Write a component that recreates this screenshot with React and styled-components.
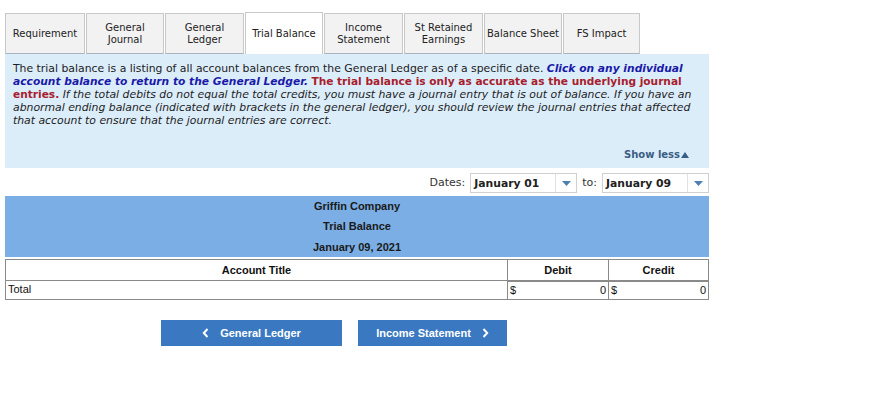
import React from "react";
import styled, { createGlobalStyle } from "styled-components";

const Global = createGlobalStyle`
  body { margin: 0; background: #fff; }
`;

const Page = styled.div`
  width: 704px;
  padding: 12px 0 0 5px;
  font-family: "DejaVu Sans", Verdana, sans-serif;
`;

const Tabs = styled.div`
  display: flex;
  align-items: flex-end;
  gap: 1px;
  height: 42px;
`;

const Tab = styled.div`
  box-sizing: border-box;
  width: ${(p) => p.$w}px;
  height: ${(p) => (p.$active ? 42 : 41)}px;
  display: flex;
  align-items: center;
  justify-content: center;
  text-align: center;
  font-size: 10px;
  line-height: 12px;
  color: #222;
  background: ${(p) => (p.$active ? "#fff" : "#f2f2f2")};
  border: 1px solid #c8c8c8;
  border-bottom: ${(p) => (p.$active ? "none" : "1px solid #a8b4c0")};
`;

const Info = styled.div`
  background: #dcedfa;
  height: 114px;
  box-sizing: border-box;
  padding: 8px 4px 0 8px;
  display: flex;
  flex-direction: column;
`;

const InfoText = styled.p`
  margin: 0;
  font-size: 10.85px;
  line-height: 13px;
  color: #222;
`;

const Blue = styled.span`
  color: #1a1aa8;
  font-weight: bold;
  font-style: italic;
  font-size: 10.7px;
`;

const Red = styled.span`
  color: #a8202c;
  font-weight: bold;
  font-size: 10.6px;
`;

const Em = styled.span`
  font-style: italic;
`;

const ShowLess = styled.div`
  margin-top: auto;
  margin-bottom: 8px;
  align-self: flex-end;
  padding-right: 16px;
  font-size: 10px;
  font-weight: bold;
  color: #3a5d84;
  display: flex;
  align-items: center;
  gap: 1px;
`;

const DatesRow = styled.div`
  display: flex;
  justify-content: flex-end;
  align-items: flex-end;
  gap: 5px;
  height: 26px;
  box-sizing: border-box;
  padding-bottom: 1px;
  font-size: 11px;
  color: #333;
`;

const Label = styled.span`
  line-height: 20px;
`;

const Select = styled.div`
  box-sizing: border-box;
  width: 107px;
  height: 20px;
  border: 1px solid #d0d0d0;
  background: #fff;
  display: flex;
  align-items: center;
`;

const SelectValue = styled.span`
  flex: 1;
  padding-left: 3px;
  font-weight: bold;
  font-size: 10.8px;
  color: #222;
`;

const SelectArrow = styled.span`
  width: 20px;
  height: 100%;
  border-left: 1px solid #e2e2e2;
  display: flex;
  align-items: center;
  justify-content: center;
`;

const Header = styled.div`
  margin-top: 2px;
  background: #7aaee4;
  height: 61px;
  display: flex;
  flex-direction: column;
  align-items: center;
  box-sizing: border-box;
`;

const HeaderLine = styled.div`
  height: 20.5px;
  line-height: 20px;
  font-family: "Liberation Sans", Arial, sans-serif;
  font-weight: bold;
  font-size: 11px;
  color: #1a1a1a;
`;

const Table = styled.div`
  margin-top: 2px;
  border: 1px solid #8a8a8a;
  font-family: "Liberation Sans", Arial, sans-serif;
  font-size: 11px;
  color: #111;
  display: grid;
  grid-template-columns: 501px 101px 1fr;
`;

const HeadCell = styled.div`
  height: 20px;
  line-height: 20px;
  text-align: center;
  font-weight: bold;
  border-left: ${(p) => (p.$first ? "none" : "1px solid #8a8a8a")};
  border-bottom: 1px solid #8a8a8a;
`;

const Cell = styled.div`
  height: 17px;
  line-height: 17px;
  padding: 0 2px;
  display: flex;
  justify-content: space-between;
  border-left: ${(p) => (p.$first ? "none" : "1px solid #8a8a8a")};
  border-top: ${(p) => (p.$first ? "none" : "2px solid #8a8a8a")};
  margin-top: ${(p) => (p.$first ? "0" : "-1px")};
`;

const Buttons = styled.div`
  display: flex;
  gap: 16px;
  padding: 20px 0 0 156px;
`;

const NavButton = styled.button`
  width: ${(p) => p.$w}px;
  height: 26px;
  border: none;
  background: #3a78c2;
  color: #fff;
  font-family: "Liberation Sans", Arial, sans-serif;
  font-weight: bold;
  font-size: 11px;
  display: flex;
  align-items: center;
  justify-content: center;
  gap: 11px;
  padding: 0;
`;

const Chevron = ({ dir }) => (
  <svg width="7" height="10" viewBox="0 0 7 10">
    <path
      d={dir === "left" ? "M5.5 1 L1.8 5 L5.5 9" : "M1.5 1 L5.2 5 L1.5 9"}
      fill="none"
      stroke="#fff"
      strokeWidth="2"
    />
  </svg>
);

const Caret = () => (
  <svg width="9" height="5" viewBox="0 0 9 5">
    <path d="M0 0 L9 0 L4.5 5 Z" fill="#4c7fb3" />
  </svg>
);

const UpTri = () => (
  <svg width="8" height="6" viewBox="0 0 8 6">
    <path d="M0 6 L8 6 L4 0 Z" fill="#3a5d84" />
  </svg>
);

const tabs = [
  { label: "Requirement", w: 80 },
  { label: ["General", "Journal"], w: 78 },
  { label: ["General", "Ledger"], w: 79 },
  { label: "Trial Balance", active: true, w: 78 },
  { label: ["Income", "Statement"], w: 79 },
  { label: ["St Retained", "Earnings"], w: 79 },
  { label: "Balance Sheet", w: 78 },
  { label: "FS Impact", w: 77 },
];

export default function App() {
  return (
    <Page>
      <Global />
      <Tabs>
        {tabs.map((t, i) => (
          <Tab key={i} $active={t.active} $w={t.w}>
            {Array.isArray(t.label) ? (
              <span>
                {t.label[0]}
                <br />
                {t.label[1]}
              </span>
            ) : (
              t.label
            )}
          </Tab>
        ))}
      </Tabs>
      <Info>
        <InfoText>
          The trial balance is a listing of all account balances from the General Ledger as of a specific date.{" "}
          <Blue>Click on any individual account balance to return to the General Ledger.</Blue>{" "}
          <Red>The trial balance is only as accurate as the underlying journal entries.</Red>{" "}
          <Em>
            If the total debits do not equal the total credits, you must have a journal entry that is out of balance. If
            you have an abnormal ending balance (indicated with brackets in the general ledger), you should review the
            journal entries that affected that account to ensure that the journal entries are correct.
          </Em>
        </InfoText>
        <ShowLess>
          Show less <UpTri />
        </ShowLess>
      </Info>
      <DatesRow>
        <Label>Dates:</Label>
        <Select>
          <SelectValue>January 01</SelectValue>
          <SelectArrow>
            <Caret />
          </SelectArrow>
        </Select>
        <Label>to:</Label>
        <Select>
          <SelectValue>January 09</SelectValue>
          <SelectArrow>
            <Caret />
          </SelectArrow>
        </Select>
      </DatesRow>
      <Header>
        <HeaderLine>Griffin Company</HeaderLine>
        <HeaderLine>Trial Balance</HeaderLine>
        <HeaderLine>January 09, 2021</HeaderLine>
      </Header>
      <Table>
        <HeadCell $first>Account Title</HeadCell>
        <HeadCell>Debit</HeadCell>
        <HeadCell>Credit</HeadCell>
        <Cell $first>Total</Cell>
        <Cell>
          <span>$</span>
          <span>0</span>
        </Cell>
        <Cell>
          <span>$</span>
          <span>0</span>
        </Cell>
      </Table>
      <Buttons>
        <NavButton $w={181}>
          <Chevron dir="left" />
          General Ledger
        </NavButton>
        <NavButton $w={149}>
          Income Statement
          <Chevron dir="right" />
        </NavButton>
      </Buttons>
    </Page>
  );
}
